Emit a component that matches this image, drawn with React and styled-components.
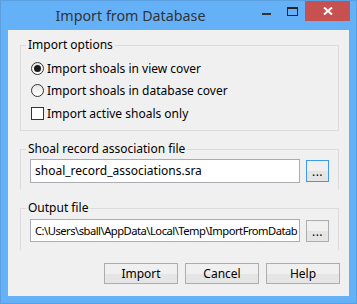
import React from 'react';
import styled, { createGlobalStyle } from 'styled-components';

const GlobalStyle = createGlobalStyle`
  html, body {
    margin: 0;
    padding: 0;
  }
  body {
    font-family: "Noto Sans", "Open Sans", sans-serif;
    font-size: 12px;
    color: #000;
  }
`;

const Window = styled.div`
  width: 357px;
  height: 304px;
  box-sizing: border-box;
  border: 1px solid #5a9fe0;
  background-color: #65b1f8;
  display: flex;
  flex-direction: column;
`;

const TitleBar = styled.div`
  height: 29px;
  display: flex;
  align-items: flex-start;
`;

const Title = styled.div`
  flex: 1;
  height: 29px;
  line-height: 29px;
  text-align: center;
  padding-left: 7px;
  font-size: 14.3px;
  color: #333;
`;

const Controls = styled.div`
  display: flex;
  margin-right: 6px;
`;

const CtrlButton = styled.div`
  width: ${(p) => (p.close ? '45px' : '26px')};
  height: 20px;
  display: flex;
  align-items: center;
  justify-content: center;
  background-color: ${(p) => (p.close ? '#c75050' : 'transparent')};
`;

const Client = styled.div`
  flex: 1;
  margin: 0 7px 7px 7px;
  background-color: #f0f0f0;
  padding: 8px 10px 0 12px;
  display: flex;
  flex-direction: column;
`;

const Group = styled.fieldset`
  margin: ${(p) => (p.first ? '0' : '11px 0 0 0')};
  padding: 0;
  border: 1px solid #dcdcdc;
  border-bottom: ${(p) => (p.open ? 'none' : '1px solid #dcdcdc')};
  min-width: 0;
`;

const GroupBody = styled.div`
  padding: ${(p) => p.pad};
  display: flex;
  flex-direction: column;
`;

const Legend = styled.legend`
  margin-left: 5px;
  padding: 0 2px;
  line-height: 14px;
  font-size: 12px;
`;

const OptionRow = styled.label`
  display: flex;
  align-items: center;
  height: 16px;
  gap: 3px;
  margin-top: ${(p) => p.top || 0}px;
`;

const Radio = styled.span`
  width: 13px;
  height: 13px;
  box-sizing: border-box;
  border-radius: 50%;
  border: 1px solid #333;
  background: linear-gradient(#e6e6e6, #fff);
  display: flex;
  align-items: center;
  justify-content: center;
  &::after {
    content: '';
    width: 7px;
    height: 7px;
    border-radius: 50%;
    background-color: #1a1a1a;
    display: ${(p) => (p.checked ? 'block' : 'none')};
  }
`;

const CheckBox = styled.span`
  width: 13px;
  height: 13px;
  box-sizing: border-box;
  border: 1px solid #333;
  background-color: #fff;
`;

const FileRow = styled.div`
  display: flex;
  align-items: center;
  gap: 6px;
`;

const TextBox = styled.div`
  flex: 1;
  min-width: 0;
  height: ${(p) => p.h}px;
  box-sizing: border-box;
  border: 1px solid #abadb3;
  background-color: #fff;
  padding: 0 4px;
  line-height: ${(p) => p.h - 2}px;
  white-space: nowrap;
  overflow: hidden;
  font-size: ${(p) => (p.tight ? '11.2px' : '12px')};
  letter-spacing: ${(p) => (p.tight ? '-0.5px' : '0')};
`;

const BrowseButton = styled.div`
  width: 23px;
  height: 22px;
  box-sizing: border-box;
  border: 1px solid ${(p) => (p.focused ? '#3c98f0' : '#adadad')};
  background: linear-gradient(#f0f0f0 50%, #e5e5e5 50%);
  text-align: center;
  line-height: 22px;
  font-size: 12px;
  letter-spacing: 0.5px;
`;

const ButtonBar = styled.div`
  display: flex;
  justify-content: flex-end;
  gap: 7px;
  margin-top: 13px;
  margin-right: -1px;
`;

const DialogButton = styled.div`
  width: 74px;
  height: 21px;
  box-sizing: border-box;
  border: 1px solid #adadad;
  background: linear-gradient(#f0f0f0 50%, #e5e5e5 50%);
  text-align: center;
  line-height: 19px;
`;

const App = () => {
  return (
    <>
      <GlobalStyle />
      <Window>
        <TitleBar>
          <Title>Import from Database</Title>
          <Controls>
            <CtrlButton>
              <svg width="9" height="20" viewBox="0 0 9 20">
                <rect x="0" y="12" width="9" height="2" fill="#333" />
              </svg>
            </CtrlButton>
            <CtrlButton>
              <svg width="11" height="9" viewBox="0 0 11 9">
                <rect x="0.5" y="0.5" width="10" height="8" fill="none" stroke="#222" />
                <rect x="0" y="0" width="11" height="2" fill="#222" />
              </svg>
            </CtrlButton>
            <CtrlButton close>
              <svg width="10" height="8" viewBox="0 0 10 8">
                <path d="M1 0.5 L9 7.5 M9 0.5 L1 7.5" stroke="#fff" strokeWidth="2" />
              </svg>
            </CtrlButton>
          </Controls>
        </TitleBar>
        <Client>
          <Group first>
            <Legend>Import options</Legend>
            <GroupBody pad="8px 9px 9px 10px">
              <OptionRow>
                <Radio checked />
                Import shoals in view cover
              </OptionRow>
              <OptionRow top={6}>
                <Radio />
                Import shoals in database cover
              </OptionRow>
              <OptionRow top={7}>
                <CheckBox />
                Import active shoals only
              </OptionRow>
            </GroupBody>
          </Group>
          <Group open>
            <Legend>Shoal record association file</Legend>
            <GroupBody pad="3px 9px 7px 9px">
              <FileRow>
                <TextBox h={24}>shoal_record_associations.sra</TextBox>
                <BrowseButton focused>...</BrowseButton>
              </FileRow>
            </GroupBody>
          </Group>
          <Group open>
            <Legend>Output file</Legend>
            <GroupBody pad="4px 9px 8px 9px">
              <FileRow>
                <TextBox h={23} tight>C:\Users\sball\AppData\Local\Temp\ImportFromDatab</TextBox>
                <BrowseButton>...</BrowseButton>
              </FileRow>
            </GroupBody>
          </Group>
          <ButtonBar>
            <DialogButton>Import</DialogButton>
            <DialogButton>Cancel</DialogButton>
            <DialogButton>Help</DialogButton>
          </ButtonBar>
        </Client>
      </Window>
    </>
  );
};

export default App;
